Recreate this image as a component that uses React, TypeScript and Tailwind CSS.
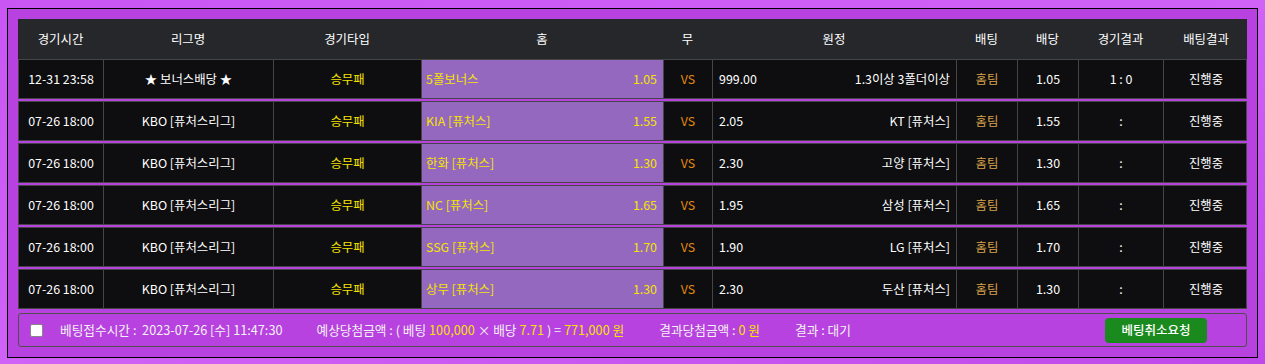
import React from "react";

type Row = {
  time: string;
  league: string;
  home: string;
  homeOdds: string;
  awayOdds: string;
  away: string;
  odds: string;
  result: string;
};

const rows: Row[] = [
  { time: "12-31 23:58", league: "★ 보너스배당 ★", home: "5폴보너스", homeOdds: "1.05", awayOdds: "999.00", away: "1.3이상 3폴더이상", odds: "1.05", result: "1 : 0" },
  { time: "07-26 18:00", league: "KBO [퓨처스리그]", home: "KIA [퓨처스]", homeOdds: "1.55", awayOdds: "2.05", away: "KT [퓨처스]", odds: "1.55", result: ":" },
  { time: "07-26 18:00", league: "KBO [퓨처스리그]", home: "한화 [퓨처스]", homeOdds: "1.30", awayOdds: "2.30", away: "고양 [퓨처스]", odds: "1.30", result: ":" },
  { time: "07-26 18:00", league: "KBO [퓨처스리그]", home: "NC [퓨처스]", homeOdds: "1.65", awayOdds: "1.95", away: "삼성 [퓨처스]", odds: "1.65", result: ":" },
  { time: "07-26 18:00", league: "KBO [퓨처스리그]", home: "SSG [퓨처스]", homeOdds: "1.70", awayOdds: "1.90", away: "LG [퓨처스]", odds: "1.70", result: ":" },
  { time: "07-26 18:00", league: "KBO [퓨처스리그]", home: "상무 [퓨처스]", homeOdds: "1.30", awayOdds: "2.30", away: "두산 [퓨처스]", odds: "1.30", result: ":" },
];

const headers = ["경기시간", "리그명", "경기타입", "홈", "무", "원정", "배팅", "배당", "경기결과", "배팅결과"];

const headCols = "grid grid-cols-[85px_170px_148px_242px_49px_244px_61px_61px_85px_86px]";
// rows carry a 1px border, so the outer columns lose a pixel each
const rowCols = "grid grid-cols-[84px_170px_148px_242px_49px_244px_61px_61px_85px_85px]";
const cell = "flex items-center justify-center border-l border-[#454545] first:border-l-0";

export default function App() {
  return (
    <div
      className="w-[1265px] h-[364px] pt-2 pl-[7px] bg-gradient-to-br from-[#c956f3] via-[#d062f7] to-[#bf48ea] text-[12.4px] text-white"
      style={{ fontFamily: '"Noto Sans CJK KR", "Noto Sans", sans-serif' }}
    >
      <div className="w-[1251px] border border-black bg-[#b842e0] p-[10px]">
        <div className={`${headCols} h-10 bg-[#25272a]`}>
          {headers.map((h) => (
            <div key={h} className="flex items-center justify-center">
              {h}
            </div>
          ))}
        </div>

        <div className="flex flex-col gap-[2px]">
          {rows.map((r, i) => (
            <div key={i} className={`${rowCols} h-10 bg-[#0e0e10] border border-[#454545]`}>
              <div className={cell}>{r.time}</div>
              <div className={cell}>{r.league}</div>
              <div className={`${cell} text-[#f5e400]`}>승무패</div>
              <div className={`${cell} !justify-between bg-[#9468be] px-1 text-[#f5e400]`}>
                <span>{r.home}</span>
                <span className="pr-[2px]">{r.homeOdds}</span>
              </div>
              <div className={`${cell} text-[#e38a0c]`}>VS</div>
              <div className={`${cell} !justify-between px-1.5`}>
                <span>{r.awayOdds}</span>
                <span>{r.away}</span>
              </div>
              <div className={`${cell} text-[#d8a24a]`}>홈팀</div>
              <div className={cell}>{r.odds}</div>
              <div className={cell}>{r.result}</div>
              <div className={cell}>진행중</div>
            </div>
          ))}
        </div>

        <div className="mt-[4px] h-[34px] flex items-center border border-[#4e4e4e] rounded-[3px] pl-[11px] pr-[39px] text-[12.7px] text-[#f2f2f2]">
          <span className="w-[13px] h-[13px] bg-white border border-[#888] rounded-[2px]" />
          <span className="ml-[17px]">베팅접수시간 :&nbsp; 2023-07-26 [수] 11:47:30</span>
          <span className="ml-[34px]">
            예상당첨금액 : ( 베팅 <span className="text-[#f5e400]">100,000</span> × 배당{" "}
            <span className="text-[#f5e400]">7.71</span> ) = <span className="text-[#f5e400]">771,000 원</span>
          </span>
          <span className="ml-[35px]">
            결과당첨금액 : <span className="text-[#f5e400]">0 원</span>
          </span>
          <span className="ml-[35px]">결과 : 대기</span>
          <button className="ml-auto w-[102px] h-[25px] rounded-[4px] bg-[#1b8a1e] text-[12.5px] text-white font-medium">
            베팅취소요청
          </button>
        </div>
      </div>
    </div>
  );
}
